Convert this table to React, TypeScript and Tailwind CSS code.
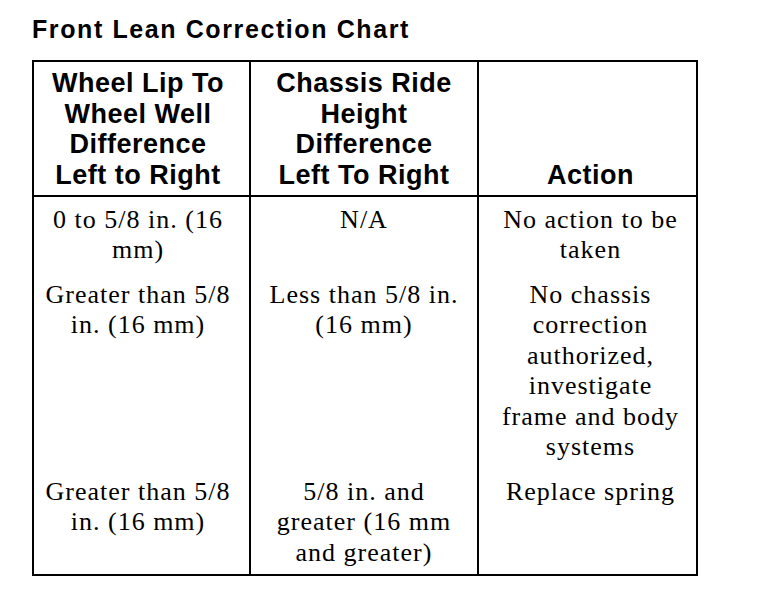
import React from 'react';

const head = "font-['Liberation_Sans',Arial,sans-serif] font-bold text-[27px] leading-[30.7px] tracking-[0.5px]";
const body = "font-['Liberation_Serif','Times_New_Roman',serif] text-[26px] leading-[30.5px] tracking-[1px]";

const rows: [React.ReactNode, React.ReactNode, React.ReactNode][] = [
    [
        <>0 to 5/8 in. (16<br />mm)</>,
        <>N/A</>,
        <>No action to be<br />taken</>,
    ],
    [
        <>Greater than 5/8<br />in. (16 mm)</>,
        <>Less than 5/8 in.<br />(16 mm)</>,
        <>No chassis<br />correction<br />authorized,<br />investigate<br />frame and body<br />systems</>,
    ],
    [
        <>Greater than 5/8<br />in. (16 mm)</>,
        <>5/8 in. and<br />greater (16 mm<br />and greater)</>,
        <>Replace spring</>,
    ],
];

const App: React.FC = () => {
    return (
        <div className="min-h-screen bg-white text-black pt-[15px] pl-[32px]">
            <h1 className="font-['Liberation_Sans',Arial,sans-serif] font-bold text-[25px] leading-[28px] tracking-[1.6px] mb-[17px]">
                Front Lean Correction Chart
            </h1>

            <table className="border-collapse border-2 border-black w-[664px] table-fixed">
                <colgroup>
                    <col className="w-[217px]" />
                    <col className="w-[228px]" />
                    <col className="w-[219px]" />
                </colgroup>
                <thead>
                    <tr className={`${head} border-b-2 border-black`}>
                        <th className="border-r-2 border-black pt-[6px] pb-[4px] pr-[7px] align-bottom font-bold">
                            Wheel Lip To<br />Wheel Well<br />Difference<br />Left to Right
                        </th>
                        <th className="border-r-2 border-black pt-[6px] pb-[4px] align-bottom font-bold">
                            Chassis Ride<br />Height<br />Difference<br />Left To Right
                        </th>
                        <th className="pt-[6px] pb-[4px] pl-[6px] align-bottom font-bold">Action</th>
                    </tr>
                </thead>
                <tbody>
                    {rows.map((r, i) => (
                        <tr key={i} className={body}>
                            <td className="border-r-2 border-black text-center align-top pt-[8px] pb-[6px] pr-[7px]">{r[0]}</td>
                            <td className="border-r-2 border-black text-center align-top pt-[8px] pb-[6px]">{r[1]}</td>
                            <td className="text-center align-top pt-[8px] pb-[6px] pl-[6px]">{r[2]}</td>
                        </tr>
                    ))}
                </tbody>
            </table>
        </div>
    );
};

export default App;
